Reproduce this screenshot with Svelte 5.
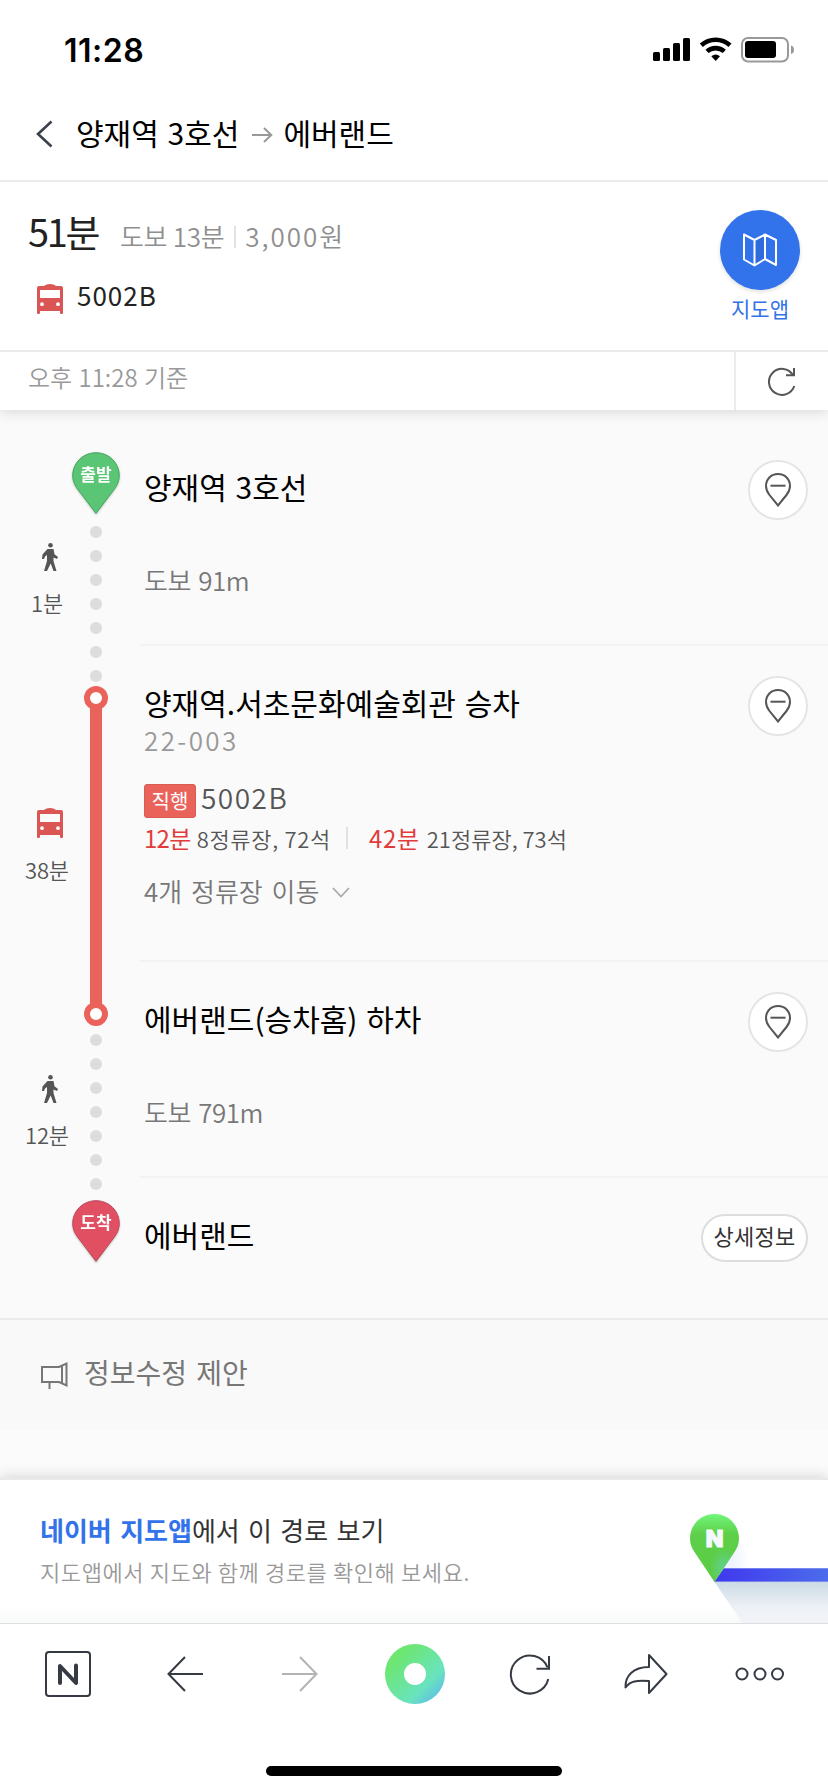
<script lang="ts">
	type Leg = { kind: 'walk' | 'bus'; time: string };
	type Arrival = { time: string; detail: string };

	const legs: Leg[] = [
		{ kind: 'walk', time: '1분' },
		{ kind: 'bus', time: '38분' },
		{ kind: 'walk', time: '12분' }
	];

	const arrivals: Arrival[] = [
		{ time: '12분', detail: '8정류장, 72석' },
		{ time: '42분', detail: '21정류장, 73석' }
	];
</script>

{#snippet bus()}
	<svg class="bus" width="26" height="30" viewBox="0 0 26 30">
		<path
			fill="#d95655"
			fill-rule="evenodd"
			d="M2 2h5c1.500-1.300 3.500-2 6-2s4.500.7 6 2h5a2 2 0 0 1 2 2v25a1 1 0 0 1-1 1h-1a1 1 0 0 1-1-1v-2H3v2a1 1 0 0 1-1 1H1a1 1 0 0 1-1-1V4a2 2 0 0 1 2-2zM3 6v8h20V6zM5 18.300a1.900 1.900 0 1 0 0 3.800 1.900 1.900 0 0 0 0-3.800zM21 18.300a1.900 1.900 0 1 0 0 3.800 1.900 1.900 0 0 0 0-3.800z"
		/>
	</svg>
{/snippet}

{#snippet walk()}
	<svg class="walk" width="16" height="28" viewBox="0 0 16 28">
		<circle cx="8.500" cy="2.300" r="2.300" fill="#555" />
		<path
			fill="#555"
			d="M5.500 6h6l1 5.200 3.500 2.800-1 2-3.500-1.500v3.500l3 10h-3L8.700 20.500 5 28H2l3-10v-6l-2 1.500L2 16H0l.5-4.500z"
		/>
	</svg>
{/snippet}

{#snippet pin(color: string, edge: string, label: string)}
	<svg class="pin" width="48" height="64" viewBox="0 0 48 64">
		<path
			d="M24 .7C11 .7.7 10.800.7 23.500c0 6 2.600 11 6.300 15.500L24 61.500 41 39c3.700-4.500 6.300-9.500 6.300-15.500C47.300 10.800 37 .7 24 .7z"
			fill={color}
			stroke={edge}
		/>
		<text x="24" y="29">{label}</text>
	</svg>
{/snippet}

{#snippet dots()}
	<div class="dots">
		{#each { length: 7 } as _}
			<i></i>
		{/each}
	</div>
{/snippet}

{#snippet placeButton()}
	<button class="place" aria-label="위치">
		<svg width="28" height="34" viewBox="0 0 28 34" fill="none" stroke="#555" stroke-width="2">
			<path d="M14 1C7 1 2 6.200 2 13c0 3.500 1.300 6.200 3.500 9L14 32.500 22.500 22c2.200-2.800 3.500-5.500 3.500-9C26 6.200 21 1 14 1z" />
			<path d="M6.500 12.700h15" />
		</svg>
	</button>
{/snippet}

<div class="screen">
	<div class="status">
		<span class="clock">11:28</span>
		<svg width="142" height="26" viewBox="0 0 142 26">
			<rect x="0" y="15" width="7" height="9" rx="1.500" />
			<rect x="10" y="11" width="7" height="13" rx="1.500" />
			<rect x="20" y="6" width="7" height="18" rx="1.500" />
			<rect x="30" y="1" width="7" height="23" rx="1.500" />
			<g fill="none" stroke="#000" stroke-width="4.600">
				<path d="M48.300 8.200a21.500 21.500 0 0 1 28.700 0" />
				<path d="M54 14.400a13 13 0 0 1 17.300 0" />
			</g>
			<path d="M58.300 19.300a7 7 0 0 1 8.700 0l-4.350 4.700z" />
			<rect x="89" y="1" width="46" height="23.500" rx="6" fill="none" stroke="#999" stroke-width="2" />
			<rect x="92" y="4" width="31" height="17" rx="3" />
			<path d="M138 8.500c4 1 4 7.500 0 8.500z" fill="#999" />
		</svg>
	</div>

	<header>
		<svg class="back" width="17" height="28" viewBox="0 0 17 28">
			<path d="M15.500 1.500 2 14l13.500 12.500" fill="none" stroke="#3b424c" stroke-width="2.600" />
		</svg>
		<span>양재역 3호선</span>
		<svg class="to" width="21" height="16" viewBox="0 0 21 16">
			<path d="M0 8h19M12 1l7.300 7L12 15" fill="none" stroke="#999" stroke-width="2" />
		</svg>
		<span>에버랜드</span>
	</header>

	<section class="summary">
		<div class="info">
			<div class="total">
				<strong>51분</strong>
				<span class="walking">도보 13분</span>
				<i></i>
				<span class="fare">3,000원</span>
			</div>
			<div class="line">
				{@render bus()}
				<span>5002B</span>
			</div>
		</div>
		<div class="app">
			<div class="app-icon">
				<svg width="34" height="34" viewBox="0 0 34 34" fill="none" stroke="#fff" stroke-width="2" stroke-linejoin="round">
					<path d="M11.500 7v25L22 26V1z" fill="#2f6bdc" stroke="none" />
					<path d="M1 1.500 11.500 7 22 1.500 33 7v25l-11-6-10.500 6.500L1 26.500zM11.500 7v25.500M22 1.500V26" />
				</svg>
			</div>
			<span>지도앱</span>
		</div>
	</section>

	<div class="updated">
		<span>오후 11:28 기준</span>
		<button aria-label="새로고침">
			<svg width="28" height="29" viewBox="0 0 28 29" fill="none" stroke="#555" stroke-width="2">
				<path d="M26.300 19A13 13 0 1 1 25 8" />
				<path d="M26 1v7.300h-8" />
			</svg>
		</button>
	</div>

	<main>
		<div class="legs">
			{#each legs as leg}
				<div class="leg">
					{#if leg.kind === 'bus'}
						{@render bus()}
					{:else}
						{@render walk()}
					{/if}
					<span>{leg.time}</span>
				</div>
			{/each}
		</div>

		<div class="track">
			{@render pin('#5ac575', '#44a45c', '출발')}
			{@render dots()}
			<div class="ride">
				<i class="ring"></i>
				<i class="bar"></i>
				<i class="ring"></i>
			</div>
			{@render dots()}
			{@render pin('#e04f62', '#b9485a', '도착')}
		</div>

		<div class="steps">
			<div class="step">
				<div class="text">
					<h2>양재역 3호선</h2>
					<p class="distance">도보 91m</p>
				</div>
				{@render placeButton()}
			</div>
			<div class="step boarding">
				<div class="text">
					<h2>양재역.서초문화예술회관 승차</h2>
					<p class="code">22-003</p>
					<p class="route"><em>직행</em><span>5002B</span></p>
					<p class="arrivals">
						{#each arrivals as arrival}
							<span class="arrival"><b>{arrival.time}</b>{arrival.detail}</span>
						{/each}
					</p>
					<p class="stops">
						4개 정류장 이동
						<svg width="18" height="11" viewBox="0 0 18 11">
							<path d="m1 1 8 8.500L17 1" fill="none" stroke="#aaa" stroke-width="1.800" />
						</svg>
					</p>
				</div>
				{@render placeButton()}
			</div>
			<div class="step">
				<div class="text">
					<h2>에버랜드(승차홈) 하차</h2>
					<p class="distance">도보 791m</p>
				</div>
				{@render placeButton()}
			</div>
			<div class="step arrive">
				<div class="text">
					<h2>에버랜드</h2>
				</div>
				<button class="detail">상세정보</button>
			</div>
		</div>
	</main>

	<div class="suggest">
		<svg width="27" height="28" viewBox="0 0 27 28" fill="none" stroke="#777" stroke-width="2">
			<path d="M1 6h17l7.500-3.500v22L18 21H1zM21 4v19M8.500 21v7" />
		</svg>
		<span>정보수정 제안</span>
	</div>

	<section class="promo">
		<div class="copy">
			<p class="lead"><b>네이버 지도앱</b>에서 이 경로 보기</p>
			<p class="sub">지도앱에서 지도와 함께 경로를 확인해 보세요.</p>
		</div>
		<svg width="148" height="143" viewBox="0 0 148 143">
			<defs>
				<linearGradient id="road">
					<stop offset="0" stop-color="#4037ee" />
					<stop offset="1" stop-color="#4c6cec" />
				</linearGradient>
				<linearGradient id="shade" x2="0" y2="1">
					<stop offset="0" stop-color="#cbdbe5" />
					<stop offset=".65" stop-color="#eef2f6" />
					<stop offset="1" stop-color="#f1f3f7" />
				</linearGradient>
				<linearGradient id="leaf" x2="0" y2="1">
					<stop offset="0" stop-color="#72f67b" />
					<stop offset=".3" stop-color="#5dcf48" />
					<stop offset="1" stop-color="#5bcb45" />
				</linearGradient>
				<radialGradient id="glow" cx=".7" cy=".79" r=".3">
					<stop offset="0" stop-color="#62d28e" />
					<stop offset="1" stop-color="#62d28e" stop-opacity="0" />
				</radialGradient>
				<linearGradient id="halo">
					<stop offset=".5" stop-color="#f1f4ff" />
					<stop offset="1" stop-color="#fff" />
				</linearGradient>
			</defs>
			<path d="M50 50 69 74v14H36z" fill="url(#halo)" />
			<path d="M34.500 102H148v41H62.500z" fill="url(#shade)" />
			<path d="M44 88h104v14H34z" fill="url(#road)" />
			<path d="M44 88.500h104M35 101.500h113" stroke="#8f9bf0" stroke-opacity=".7" />
			<path d="M34.500 34C20.500 34 10 45 10 58.500c0 5.500 1.800 9.500 4.500 13.500l20 30 20-30c2.700-4 4.500-8 4.500-13.500C59 45 48.500 34 34.500 34z" fill="url(#leaf)" />
			<path d="M34.500 34C20.500 34 10 45 10 58.500c0 5.500 1.800 9.500 4.500 13.500l20 30 20-30c2.700-4 4.500-8 4.500-13.500C59 45 48.500 34 34.500 34z" fill="url(#glow)" />
			<text x="34.500" y="67">N</text>
		</svg>
	</section>

	<nav>
		<div class="tools">
			<span>
				<svg width="46" height="46" viewBox="0 0 46 46">
					<rect x="1" y="1" width="44" height="44" rx="3" fill="none" stroke="#353a43" stroke-width="2" />
					<path d="M15 32V15l16 17V14.500" fill="none" stroke="#353a43" stroke-width="4" stroke-linecap="round" stroke-linejoin="round" />
				</svg>
			</span>
			<span>
				<svg width="36" height="36" viewBox="0 0 36 36" fill="none" stroke="#353a43" stroke-width="2">
					<path d="M36 18H2M18 1 1.500 18 18 35" />
				</svg>
			</span>
			<span>
				<svg width="36" height="36" viewBox="0 0 36 36" fill="none" stroke="#b3b3b3" stroke-width="2">
					<path d="M0 18h34M18 1l16.500 17L18 35" />
				</svg>
			</span>
			<span><i class="green-dot"></i></span>
			<span>
				<svg width="42" height="42" viewBox="0 0 42 42" fill="none" stroke="#353a43" stroke-width="2">
					<path d="M39.300 26A19 19 0 1 1 38.500 14.500" />
					<path d="M40 3v12.700H27.500" />
				</svg>
			</span>
			<span>
				<svg width="46" height="42" viewBox="0 0 46 42" fill="none" stroke="#353a43" stroke-width="2" stroke-linejoin="round">
					<path d="M27 2 44.500 21 27 40V28c-12-1-19 0-23.500 6.500C3 23 11 14 27 14z" />
				</svg>
			</span>
			<span>
				<svg width="50" height="14" viewBox="0 0 50 14" fill="none" stroke="#353a43" stroke-width="2">
					<circle cx="7" cy="7" r="5.500" />
					<circle cx="25" cy="7" r="5.500" />
					<circle cx="42.500" cy="7" r="5.500" />
				</svg>
			</span>
		</div>
		<div class="home"></div>
	</nav>
</div>

<style>
	:global(body) {
		margin: 0;
		background: #fff;
	}
	.screen {
		display: flex;
		flex-direction: column;
		width: 828px;
		height: 1792px;
		overflow: hidden;
		background: #fff;
		color: #000;
		font-family: 'Noto Sans CJK KR', sans-serif;
		font-size: 26px;
		line-height: 36px;
	}
	.screen * {
		box-sizing: border-box;
	}
	svg {
		display: block;
		flex: none;
	}
	h2,
	p {
		margin: 0;
		font-weight: 400;
	}
	i,
	em {
		font-style: normal;
	}
	button {
		padding: 0;
		font: inherit;
		color: inherit;
	}

	.status {
		display: flex;
		justify-content: space-between;
		align-items: center;
		height: 90px;
		padding: 10px 33px 0 64px;
	}
	.clock {
		margin-top: 1px;
		font: 600 32px/36px Inter, sans-serif;
		letter-spacing: 0.5px;
	}

	header {
		display: flex;
		align-items: center;
		height: 92px;
		padding: 0 0 2px 36px;
		border-bottom: 2px solid #ebebeb;
		font-size: 30px;
		line-height: 40px;
	}
	header span {
		margin-top: -4px;
		word-spacing: 2px;
	}
	header .back {
		margin-right: 23px;
	}
	header .to {
		margin: 2px 10px 0 13px;
	}

	.summary {
		display: flex;
		justify-content: space-between;
		height: 170px;
		padding: 28px 28px 0;
		border-bottom: 2px solid #ebebeb;
	}
	.total {
		display: flex;
		align-items: center;
		height: 48px;
		color: #8f8f8f;
		font-weight: 350;
	}
	.total strong {
		margin: -6px 22px 0 0;
		color: #222;
		font-size: 38px;
		font-weight: 400;
		letter-spacing: -2.4px;
	}
	.total span {
		margin-top: 4px;
	}
	.total i {
		width: 2px;
		height: 22px;
		margin: 6px 9px 0 10px;
		background: #e2e2e2;
	}
	.walking {
		letter-spacing: -0.3px;
	}
	.fare {
		letter-spacing: 2px;
	}
	.line {
		display: flex;
		align-items: center;
		gap: 14px;
		margin: 26px 0 0 9px;
		color: #222;
		letter-spacing: 1px;
	}
	.line span {
		margin-top: -8px;
	}
	.app {
		display: flex;
		flex-direction: column;
		align-items: center;
		color: #3273ea;
		font-size: 21px;
		line-height: 30px;
	}
	.app-icon {
		display: flex;
		justify-content: center;
		align-items: center;
		width: 80px;
		height: 80px;
		margin-bottom: 3px;
		border-radius: 50%;
		background: #3273eb;
		box-shadow: 0 2px 4px rgba(0, 0, 0, 0.12);
	}

	.updated {
		position: relative;
		display: flex;
		justify-content: space-between;
		height: 58px;
		padding-left: 28px;
		background: #fff;
		box-shadow: 0 2px 12px rgba(0, 0, 0, 0.14);
		color: #999;
		font-size: 24px;
		font-weight: 350;
		line-height: 50px;
		word-spacing: 1px;
		clip-path: inset(0 0 -20px 0);
	}
	.updated button {
		display: flex;
		justify-content: center;
		align-items: center;
		width: 94px;
		border: 0;
		border-left: 2px solid #ebebeb;
		background: none;
	}

	main {
		display: flex;
		height: 910px;
		background: #fafafa;
		border-bottom: 2px solid #ebebeb;
	}
	.legs {
		display: flex;
		flex-direction: column;
		gap: 190px;
		width: 72px;
		padding: 133px 0 0 22px;
	}
	.leg {
		display: flex;
		flex-direction: column;
		align-items: center;
		gap: 15px;
		color: #555;
		font-size: 22px;
		font-weight: 350;
		line-height: 32px;
		letter-spacing: -0.2px;
	}
	.leg :global(svg) {
		margin-left: 6px;
	}
	.track {
		display: flex;
		flex-direction: column;
		align-items: center;
		width: 48px;
		padding-top: 42px;
	}
	.pin {
		filter: drop-shadow(0 1px 1px rgba(0, 0, 0, 0.2));
	}
	.pin text {
		fill: #fff;
		font-size: 17px;
		font-weight: 700;
		text-anchor: middle;
	}
	.dots {
		display: flex;
		flex-direction: column;
		gap: 12px;
		margin: 10px 0 4px;
	}
	.ride + .dots {
		margin: 8px 0 10px;
	}
	.dots i {
		width: 12px;
		height: 12px;
		border-radius: 50%;
		background: #ddd;
	}
	.ride {
		display: flex;
		flex-direction: column;
		align-items: center;
		height: 340px;
	}
	.ring {
		width: 24px;
		height: 24px;
		border: 6px solid #ea635a;
		border-radius: 50%;
		background: #fff;
	}
	.bar {
		flex: 1;
		width: 12px;
		margin: -3px 0;
		background: #ea635a;
	}

	.steps {
		flex: 1;
		padding: 20px 0 0 20px;
	}
	.step {
		display: flex;
		justify-content: space-between;
		align-items: flex-start;
		height: 216px;
		padding: 30px 20px 0 4px;
		border-bottom: 2px solid #f2f2f2;
	}
	.boarding {
		height: 316px;
	}
	.arrive {
		padding-top: 36px;
		height: 140px;
		border: 0;
	}
	.step h2 {
		margin-top: 6px;
		font-size: 30px;
		line-height: 40px;
		word-spacing: 2px;
	}
	.arrive h2 {
		margin-top: 0;
	}
	.distance {
		margin-top: 56px;
		color: #777;
		font-weight: 350;
		letter-spacing: -0.5px;
		word-spacing: 2px;
	}
	.code {
		margin-top: 2px;
		color: #999;
		font-weight: 350;
		line-height: 32px;
		letter-spacing: 2.4px;
	}
	.route {
		display: flex;
		align-items: center;
		height: 34px;
		margin-top: 28px;
		color: #555;
		font-size: 28px;
		font-weight: 350;
		letter-spacing: 1.5px;
	}
	.route em {
		width: 52px;
		height: 34px;
		margin-right: 5px;
		border: 1px solid #d95c53;
		border-radius: 3px;
		background: #ea635a;
		color: #fff;
		font-size: 20px;
		font-weight: 400;
		line-height: 31px;
		letter-spacing: 0;
		text-align: center;
	}
	.route span {
		margin-top: -8px;
	}
	.arrivals {
		display: flex;
		margin-top: 2px;
		color: #555;
		font-size: 22px;
		font-weight: 350;
		letter-spacing: 0.7px;
	}
	.arrival {
		display: flex;
		align-items: center;
	}
	.arrival b {
		margin-right: 6px;
		color: #e13c3c;
		font-size: 24px;
		font-weight: 400;
		letter-spacing: -0.7px;
	}
	.arrival + .arrival {
		letter-spacing: 0;
	}
	.arrival + .arrival b {
		margin-right: 7px;
		letter-spacing: 0.7px;
	}
	.arrival + .arrival::before {
		content: '';
		width: 2px;
		height: 22px;
		margin: 0 21px 0 15px;
		background: #e2e2e2;
	}
	.stops {
		display: flex;
		align-items: center;
		gap: 13px;
		margin-top: 17px;
		color: #777;
		font-weight: 350;
		word-spacing: 3px;
	}
	.stops svg {
		margin-top: 3px;
	}
	.place {
		display: flex;
		justify-content: center;
		align-items: center;
		width: 60px;
		height: 60px;
		border: 2px solid #e5e5e5;
		border-radius: 50%;
		background: #fff;
	}
	.detail {
		width: 107px;
		height: 48px;
		border: 2px solid #ddd;
		border-radius: 24px;
		background: #fff;
		color: #333;
		font-size: 22px;
		line-height: 38px;
		padding-bottom: 6px;
		letter-spacing: 0.3px;
	}

	.suggest {
		display: flex;
		gap: 16px;
		height: 158px;
		padding: 33px 0 0 41px;
		background: linear-gradient(#f9f9f9 110px, #fbfbfb 110px);
		color: #777;
		font-size: 28px;
		line-height: 38px;
		word-spacing: 3px;
	}
	.suggest svg {
		margin-top: 8px;
	}

	.promo {
		position: relative;
		display: flex;
		justify-content: space-between;
		height: 145px;
		border-top: 2px solid #e9e9e9;
		background: linear-gradient(#fff 125px, #f8faf9);
		box-shadow: 0 -2px 12px rgba(0, 0, 0, 0.14);
	}
	.copy {
		padding: 32px 0 0 40px;
	}
	.lead {
		color: #333;
		word-spacing: 2.5px;
	}
	.lead b {
		color: #3273eb;
		font-weight: 700;
	}
	.sub {
		margin-top: 6px;
		color: #999;
		font-size: 22px;
		font-weight: 350;
		line-height: 34px;
		letter-spacing: 0.6px;
	}
	.promo text {
		fill: #f6f8ff;
		stroke: #f6f8ff;
		stroke-width: 1px;
		font: 900 23px Inter, sans-serif;
		text-anchor: middle;
	}

	nav {
		position: relative;
		flex: 1;
		border-top: 1px solid #dcdee0;
		background: #fff;
	}
	.tools {
		display: flex;
		height: 100px;
		padding: 0 10px;
	}
	.tools span {
		display: flex;
		flex: 1;
		justify-content: center;
		align-items: center;
	}
	.tools span:first-child {
		padding-right: 2px;
	}
	.green-dot {
		width: 60px;
		height: 60px;
		border-radius: 50%;
		background:
			radial-gradient(circle, #fff 10.5px, transparent 11.5px),
			linear-gradient(135deg, #6de672 22%, #69e3bd 68%, #5cb6f2 95%);
	}
	.home {
		width: 296px;
		height: 10px;
		margin: 42px auto 0;
		border-radius: 5px;
		background: #000;
	}
</style>
